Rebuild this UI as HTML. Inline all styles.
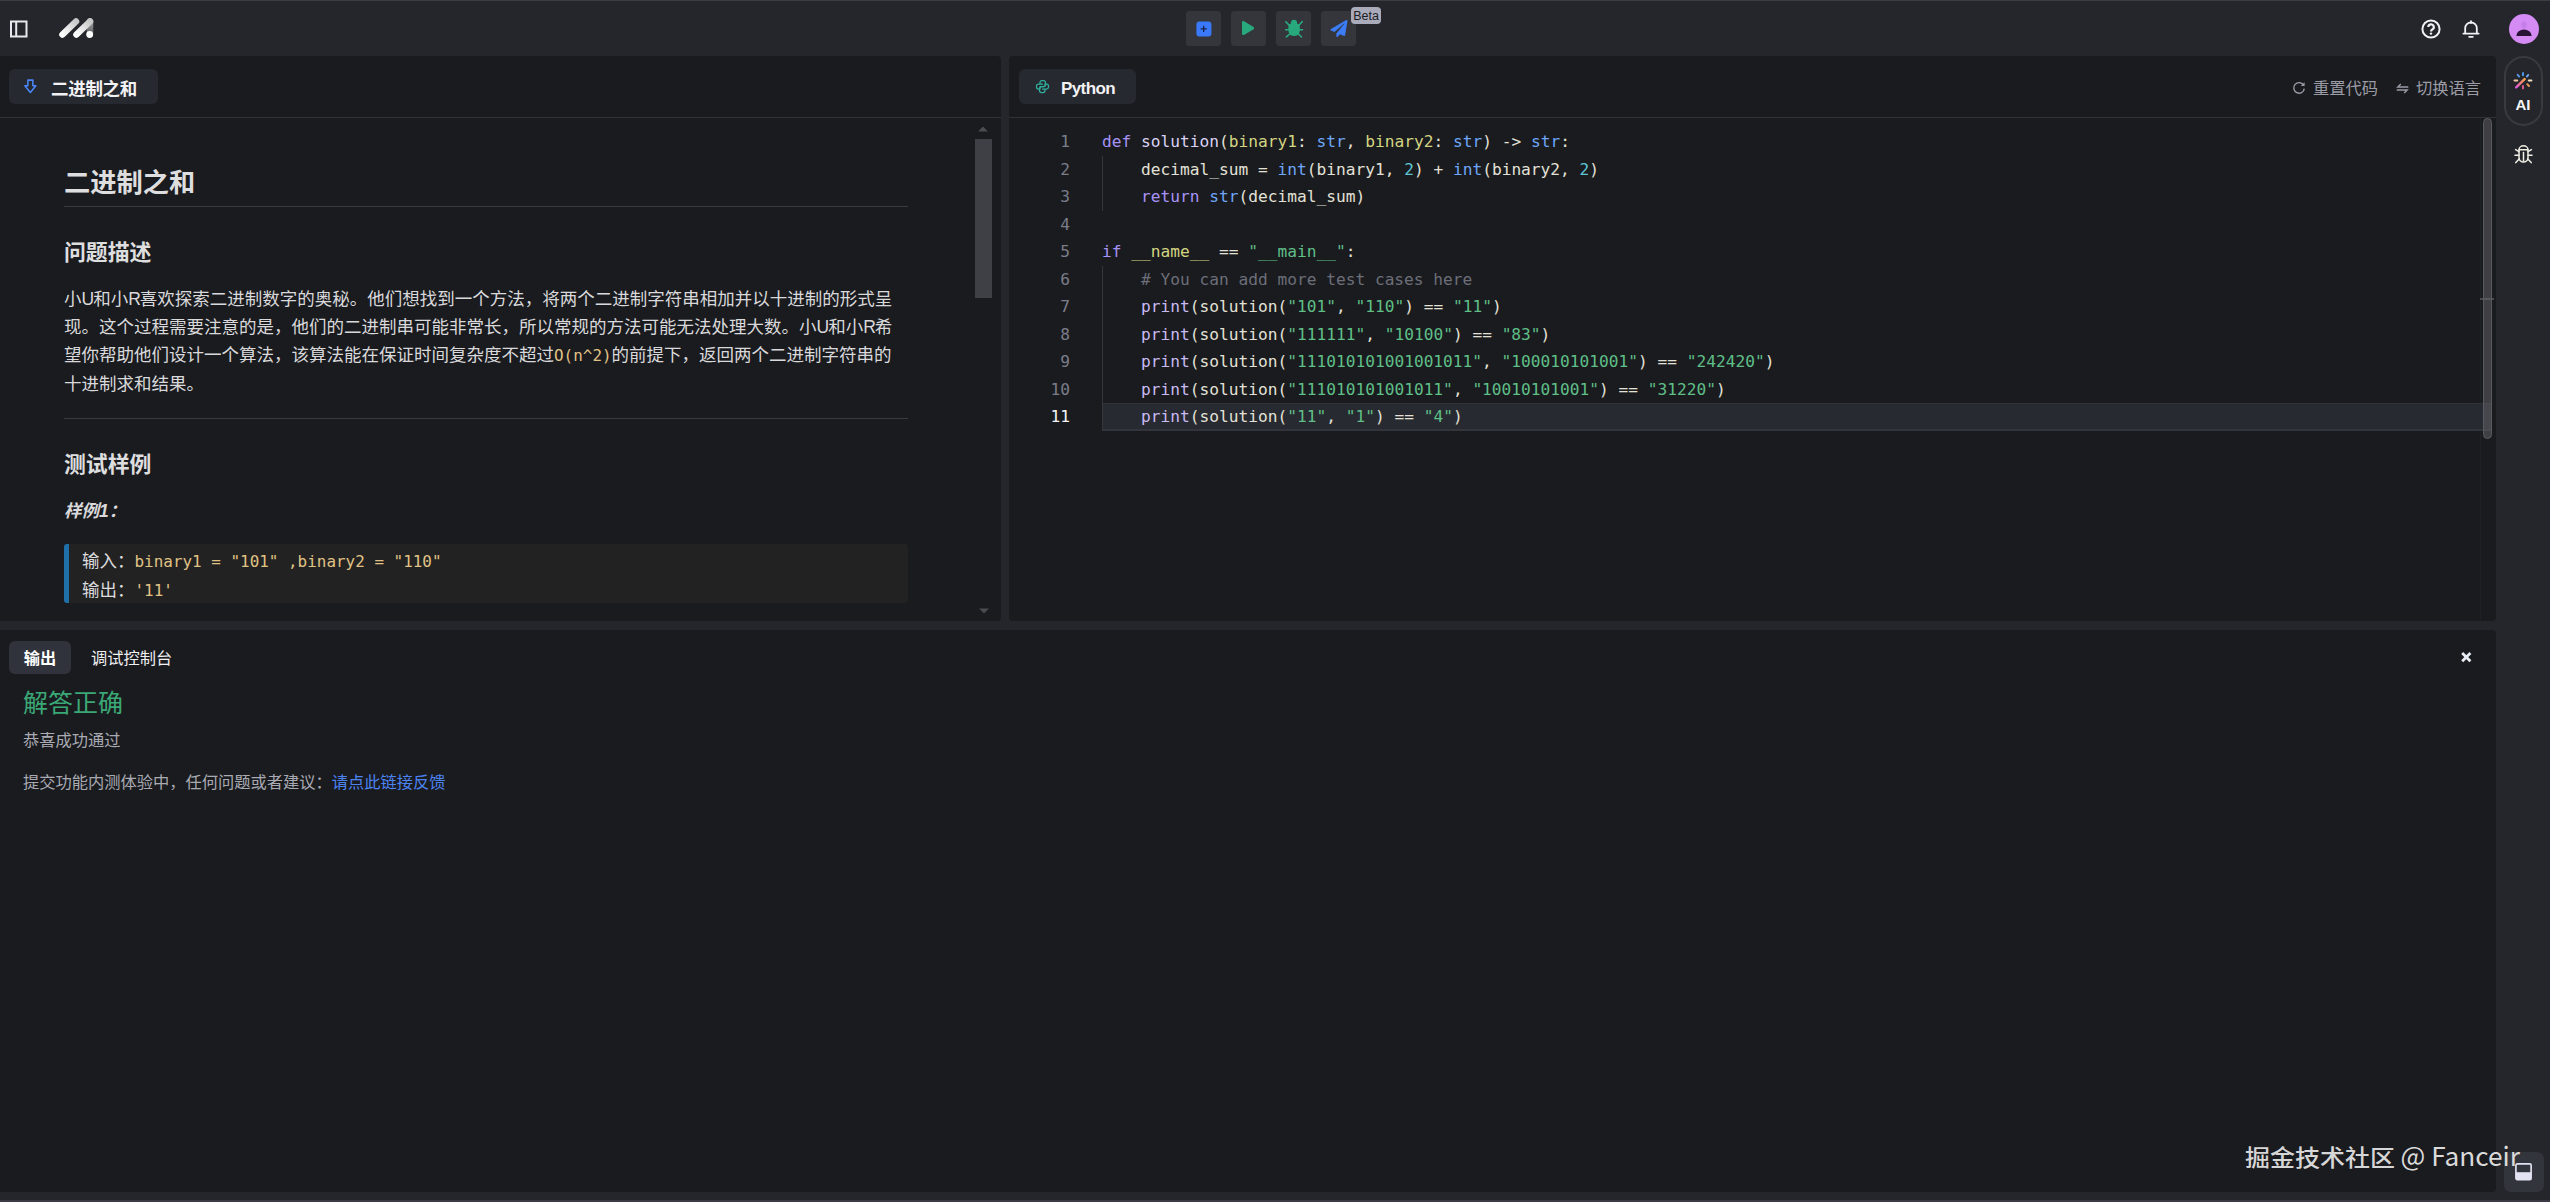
<!DOCTYPE html>
<html lang="zh-CN">
<head>
<meta charset="utf-8">
<title>二进制之和</title>
<style>
*{box-sizing:border-box;margin:0;padding:0}
html,body{width:2550px;height:1202px;overflow:hidden;background:#25262b}
body{position:relative;font-family:"Liberation Sans","Noto Sans CJK SC",sans-serif;color:#e3e3e6;font-size:17.5px}
.abs{position:absolute}
#topline{left:0;top:0;width:2550px;height:1px;background:#3c3d44}
#botline{left:0;top:1200px;width:2550px;height:2px;background:#3a3b44}
.panel{position:absolute;background:#1a1b1f;border-radius:4px;overflow:hidden}
#left{left:0;top:56px;width:1001px;height:565px;border-radius:0 4px 4px 0}
#right{left:1009px;top:56px;width:1487px;height:565px}
#bottom{left:0;top:630px;width:2496px;height:562px;border-radius:0 4px 4px 0}
.sep{position:absolute;left:0;right:0;top:61px;height:1px;background:#303238}
.tab{position:absolute;top:13px;height:35px;background:#272930;border-radius:6px;font-weight:bold;color:#f2f2f5;font-size:17.5px;line-height:35px;white-space:nowrap}
/* header */
.hbtn{position:absolute;top:11px;width:35px;height:35px;border-radius:3.500px;background:#34363c}
/* markdown */
#md{position:absolute;left:64px;top:62px;width:844px;color:#dcdcde}
#md h1{position:absolute;left:0;top:45px;font-size:26.25px;line-height:40px;font-weight:bold;color:#dededf;white-space:nowrap}
#md .hr{position:absolute;left:0;width:844px;height:1px;background:#3a3b40}
#md h2{position:absolute;left:0;font-size:21.875px;line-height:34px;font-weight:bold;color:#dededf;white-space:nowrap}
#md p{position:absolute;left:0;width:844px;font-size:17.5px;line-height:28px;color:#d9d9db}
#md p i{font-style:normal;letter-spacing:-1px}
#md .inl{font-family:"DejaVu Sans Mono","Liberation Mono",monospace;color:#e0c285;font-size:15.950px}
#md .ex{position:absolute;left:0;top:426px;width:844px;height:59px;background:#222222;border-left:5px solid #1f6fa8;border-radius:3px;padding:3px 0 0 13px;font-size:17.500px;line-height:28px;color:#dcdcde;white-space:pre}
#md .ex span{font-family:"DejaVu Sans Mono","Liberation Mono",monospace;color:#e0c285;font-size:15.950px}
/* code */
#code{position:absolute;left:0;top:62px;right:0;bottom:0;font-family:"DejaVu Sans Mono","Liberation Mono",monospace;font-size:16.195px;line-height:27.5px;color:#d8d9de}
.ln{position:absolute;left:0;width:61px;text-align:right;color:#7b7d88;height:27.5px;white-space:pre}
.cl{position:absolute;left:93px;height:27.5px;white-space:pre}
.k{color:#a693f5}.f{color:#d9d2f4}.p{color:#d3d482}.t{color:#6ea6f8}.n{color:#5ec4d6}.s{color:#5fbf87}.c{color:#6c6e78}.b{color:#c8baf3}.w{color:#e3e1d6}

.ln.cur{color:#f4f4f6}
.curline{position:absolute;left:93px;top:284.600px;width:1390px;height:28.600px;background:#282a31;border:1px solid #30323a;border-bottom:2px solid #33353c;border-right:0}
.guide{position:absolute;left:93px;width:1px;background:#34363c}
.tools{position:absolute;top:15px;height:35px;line-height:35px;font-size:16.25px;color:#9b9ca6;white-space:nowrap}
#bottom .ok{position:absolute;left:23px;top:54px;font-size:25px;line-height:38px;color:#3aa876;white-space:nowrap}
#bottom .g1{position:absolute;left:23px;top:98px;font-size:16.25px;line-height:24px;color:#a9aab2;white-space:nowrap}
#bottom .g2{position:absolute;left:23px;top:140px;font-size:16.25px;line-height:24px;color:#a9aab2;white-space:nowrap}
#bottom .g2 a{color:#4b83f0;text-decoration:none}
#wm{z-index:10;position:absolute;left:0;top:0;color:#dadada;white-space:nowrap;font-family:"Noto Sans CJK SC","Liberation Sans",sans-serif}
#wm .c{position:absolute;left:2245px;top:1137px;font-size:24.700px;line-height:38px;transform:scale(1.012,0.93);transform-origin:0 50%;font-weight:500;color:#d6d6d6}
#wm .l{position:absolute;left:2400.500px;top:1136px;font-size:26.200px;line-height:38px}
#side{position:absolute;left:2496px;top:56px;width:54px;height:1146px}
/* bottom */
#bottom .t1{position:absolute;left:9px;top:11px;width:62px;height:33px;background:#31333c;border-radius:6px;font-size:16.25px;font-weight:bold;color:#fff;text-align:center;line-height:35px}
#bottom .t2{position:absolute;left:91px;top:11px;height:33px;font-size:16.25px;color:#f0f0f2;line-height:35px;white-space:nowrap}
</style>
</head>
<body>
<div class="abs" id="topline"></div>

<!-- HEADER -->
<div id="hdr" class="abs" style="left:0;top:0;width:2550px;height:56px">
  <svg class="abs" style="left:10px;top:20px" width="18" height="18" viewBox="0 0 18 18"><rect x="1" y="1.5" width="15.5" height="15" fill="none" stroke="#e8e8f0" stroke-width="2"/><line x1="6.2" y1="1.5" x2="6.2" y2="16.5" stroke="#e8e8f0" stroke-width="2"/></svg>
  <svg class="abs" style="left:57px;top:16px" width="40" height="24" viewBox="0 0 40 24">
    <defs><linearGradient id="lg1" x1="0" y1="1" x2="1" y2="0"><stop offset="0" stop-color="#fff"/><stop offset="1" stop-color="#c8c8c8"/></linearGradient>
    <linearGradient id="lg2" gradientUnits="userSpaceOnUse" x1="0" y1="4" x2="0" y2="20"><stop offset="0" stop-color="#d0d0d0"/><stop offset="1" stop-color="#666"/></linearGradient></defs>
    <line x1="33" y1="5.5" x2="33" y2="18" stroke="url(#lg2)" stroke-width="6.5" stroke-linecap="round" opacity=".75"/>
    <line x1="5.5" y1="18.5" x2="19" y2="5.5" stroke="url(#lg1)" stroke-width="6.5" stroke-linecap="round"/>
    <line x1="19.5" y1="18.5" x2="33" y2="5.5" stroke="url(#lg1)" stroke-width="6.5" stroke-linecap="round"/>
    <circle cx="32.7" cy="18.5" r="3.4" fill="#fff"/>
  </svg>
  <div class="hbtn" style="left:1186px">
    <svg class="abs" style="left:9.500px;top:9.900px" width="16" height="16" viewBox="0 0 16 16"><rect x="0.400" y="0.400" width="15" height="15" rx="3" fill="#3b79fb"/><path d="M7.700 4.700V10.900M4.600 7.800H10.800" stroke="#16234a" stroke-width="1.300" fill="none"/></svg>
  </div>
  <div class="hbtn" style="left:1231px">
    <svg class="abs" style="left:11px;top:10.200px" width="12.300" height="14.200" viewBox="0 0 448 512"><path fill="#27a97d" d="M424.4 214.7L72.4 6.6C43.8-10.3 0 6.1 0 47.9V464c0 37.5 40.7 60.1 72.4 41.3l352-208c31.400-18.500 31.500-64.100 0-82.600z"/></svg>
  </div>
  <div class="hbtn" style="left:1276px">
    <svg class="abs" style="left:0;top:0" width="35" height="35" viewBox="0 0 35 35"><g stroke="#2bab80" stroke-width="1.600" stroke-linecap="round" fill="none"><path d="M13.200 14.200L9.900 10.900M23 14.200L26.300 10.500M12.600 18.700H9.700M23.600 18.700H26.500M13.800 23L10.300 25.800M22.400 23L25.500 26"/></g><ellipse cx="18" cy="12.300" rx="3.200" ry="3.500" fill="#27a97d"/><path d="M12.400 16Q12.400 12.700 15.200 12.700H20.800Q23.800 12.700 23.800 16V19.500a5.700 5.600 0 0 1-11.400 0z" fill="#27a97d"/></svg>
  </div>
  <div class="hbtn" style="left:1321px">
    <svg class="abs" style="left:8.5px;top:9px" width="18" height="17" viewBox="0 0 512 512"><path fill="#3b7cf7" d="M476 3.2L12.5 270.6c-18.1 10.4-15.8 35.6 2.2 43.2L121 358.4l287.3-253.2c5.5-4.9 13.3 2.6 8.6 8.3L176 407v80.5c0 23.6 28.5 32.9 42.5 15.800L282 426l124.6 52.2c14.2 6 30.4-2.9 33-18.2l72-432C515 7.8 493.3-6.8 476 3.2z"/></svg>
  </div>
  <div class="abs" style="left:1351px;top:7px;width:30px;height:17px;border-radius:4px;background:#a9aaba;color:#1c1d24;font-size:12.5px;line-height:19px;text-align:center">Beta</div>
  <!-- right icons -->
  <svg class="abs" style="left:2420px;top:18px" width="22" height="22" viewBox="0 0 22 22"><circle cx="11" cy="11" r="8.6" fill="none" stroke="#f0f0f5" stroke-width="2"/><path d="M8.3 9.1a2.75 2.75 0 1 1 4 2.4c-.9.5-1.3 1-1.300 1.900" fill="none" stroke="#f0f0f5" stroke-width="2.2"/><circle cx="11" cy="15.600" r="1.2" fill="#f0f0f5"/></svg>
  <svg class="abs" style="left:2461px;top:18px" width="20" height="22.500" viewBox="0 0 22 24"><path d="M4.600 16.500V11a6.400 6.400 0 0 1 12.800 0v5.500" fill="none" stroke="#f0f0f5" stroke-width="2"/><path d="M2.600 16.800h16.800" stroke="#f0f0f5" stroke-width="2" stroke-linecap="round"/><path d="M9 20.300h4" stroke="#f0f0f5" stroke-width="2" stroke-linecap="round"/><path d="M11 3v2" stroke="#f0f0f5" stroke-width="2" stroke-linecap="round"/></svg>
  <svg class="abs" style="left:2508px;top:13px" width="32" height="32" viewBox="0 0 32 32"><circle cx="16" cy="16" r="15" fill="#d48bf4"/><ellipse cx="16" cy="11.800" rx="2.600" ry="3.600" fill="#c67ee8"/><path d="M8.500 22.300a7.500 5.800 0 0 1 15 0v.7h-15z" fill="#2a1436"/></svg>
</div>

<!-- LEFT PANEL -->
<div class="panel" id="left">
  <div class="tab" style="left:9px;width:149px;padding-left:42px;line-height:40px;letter-spacing:-0.300px"><svg class="abs" style="left:14.300px;top:10px" width="14.700" height="15.600" viewBox="0 0 16 17"><path d="M5.300 1.200h5.400v6.200h3.300L8 14.600L2 7.400h3.300z" fill="none" stroke="#4a86f7" stroke-width="1.700" stroke-linejoin="round"/></svg>二进制之和</div>
  <div class="sep"></div>
  <div class="abs" style="left:975px;top:83px;width:17px;height:159px;background:#3f4045"></div>
  <svg class="abs" style="left:978px;top:70px" width="10" height="6" viewBox="0 0 10 6"><path d="M0 5.500L5 0.500L10 5.500z" fill="#4b4c52"/></svg>
  <svg class="abs" style="left:978.500px;top:552px" width="10" height="6" viewBox="0 0 10 6"><path d="M0 0.500L5 5.500L10 0.500z" fill="#4b4c52"/></svg>
  <div id="md">
    <h1>二进制之和</h1>
    <div class="hr" style="top:88px"></div>
    <h2 style="top:118px">问题描述</h2>
    <p style="top:167px">小<i>U</i>和小<i>R</i>喜欢探索二进制数字的奥秘。他们想找到一个方法，将两个二进制字符串相加并以十进制的形式呈现。这个过程需要注意的是，他们的二进制串可能非常长，所以常规的方法可能无法处理大数。小<i>U</i>和小<i>R</i>希望你帮助他们设计一个算法，该算法能在保证时间复杂度不超过<span class="inl">O(n^2)</span>的前提下，返回两个二进制字符串的十进制求和结果。</p>
    <div class="hr" style="top:300px"></div>
    <h2 style="top:330px">测试样例</h2>
    <p style="top:379px;font-weight:bold;font-style:italic">样例1：</p>
    <div class="ex">输入：<span>binary1 = "101" ,binary2 = "110"</span>
输出：<span>'11'</span></div>
  </div>
</div>

<!-- RIGHT PANEL -->
<div class="panel" id="right">
  <div class="tab" style="left:10px;width:117px;padding-left:42px;font-size:17px;letter-spacing:-0.600px;line-height:39px"><svg class="abs" style="left:16.200px;top:10.200px" width="15" height="15" viewBox="0 0 15 15"><g fill="none" stroke="#2fae9c" stroke-width="1.250" stroke-linecap="round" stroke-linejoin="round"><path id="pyA" d="M5 5.200V3.500a2 2 0 0 1 2-2h1.500a2 2 0 0 1 2 2V6a1.500 1.500 0 0 1-1.500 1.500H6.500A1.500 1.500 0 0 0 5 9v1H3.500a2 2 0 0 1-2-2V7a2 2 0 0 1 2-2H7.500"/><path transform="rotate(180 7.500 7.500)" d="M5 5.200V3.500a2 2 0 0 1 2-2h1.500a2 2 0 0 1 2 2V6a1.500 1.500 0 0 1-1.500 1.500H6.500A1.500 1.500 0 0 0 5 9v1H3.500a2 2 0 0 1-2-2V7a2 2 0 0 1 2-2H7.500"/></g></svg>Python</div>
  <div class="sep"></div>
  <svg class="abs" style="left:1283px;top:24.500px" width="14" height="14" viewBox="0 0 14 14"><path d="M11.600 4.200A5.300 5.300 0 1 0 12.300 7.600" fill="none" stroke="#9b9ca6" stroke-width="1.400"/><path d="M12.600 1.200v3.800H8.800z" fill="#9b9ca6"/></svg>
  <div class="tools" style="left:1304px">重置代码</div>
  <svg class="abs" style="left:1386.500px;top:26.500px" width="13" height="11" viewBox="0 0 13 11"><path d="M12.300 4H1.800L4.800 1M0.700 7H11.200L8.200 10" fill="none" stroke="#9b9ca6" stroke-width="1.400"/></svg>
  <div class="tools" style="left:1407px">切换语言</div>
  <div class="abs" style="left:1471px;top:62px;width:1px;height:503px;background:#1f2025"></div>
  <div class="abs" style="left:1473.500px;top:62px;width:9.600px;height:321px;border-radius:4.800px;background:rgba(100,100,106,0.5);border:1px solid #595a60;z-index:3"></div>
  <div class="abs" style="left:1471px;top:242px;width:14px;height:1.500px;background:#4a4b52"></div>
  <div id="code">
    <div class="curline"></div>
    <div class="guide" style="top:37.5px;height:55px"></div>
    <div class="guide" style="top:147.5px;height:165px"></div>
    <div class="ln" style="top:10.0px">1</div>
    <div class="cl" style="top:10.0px"><span class="k">def</span><span class="w"> </span><span class="f">solution</span><span class="w">(</span><span class="p">binary1</span><span class="w">: </span><span class="t">str</span><span class="w">, </span><span class="p">binary2</span><span class="w">: </span><span class="t">str</span><span class="w">) -&gt; </span><span class="t">str</span><span class="w">:</span></div>
    <div class="ln" style="top:37.5px">2</div>
    <div class="cl" style="top:37.5px"><span class="w">    decimal_sum = </span><span class="t">int</span><span class="w">(binary1, </span><span class="n">2</span><span class="w">) + </span><span class="t">int</span><span class="w">(binary2, </span><span class="n">2</span><span class="w">)</span></div>
    <div class="ln" style="top:65.0px">3</div>
    <div class="cl" style="top:65.0px"><span class="w">    </span><span class="k">return</span><span class="w"> </span><span class="t">str</span><span class="w">(decimal_sum)</span></div>
    <div class="ln" style="top:92.5px">4</div>
    <div class="ln" style="top:120.0px">5</div>
    <div class="cl" style="top:120.0px"><span class="k">if</span><span class="w"> </span><span class="p">__name__</span><span class="w"> == </span><span class="s">"__main__"</span><span class="w">:</span></div>
    <div class="ln" style="top:147.5px">6</div>
    <div class="cl" style="top:147.5px"><span class="c">    # You can add more test cases here</span></div>
    <div class="ln" style="top:175.0px">7</div>
    <div class="cl" style="top:175.0px"><span class="w">    </span><span class="b">print</span><span class="w">(solution(</span><span class="s">"101"</span><span class="w">, </span><span class="s">"110"</span><span class="w">) == </span><span class="s">"11"</span><span class="w">)</span></div>
    <div class="ln" style="top:202.5px">8</div>
    <div class="cl" style="top:202.5px"><span class="w">    </span><span class="b">print</span><span class="w">(solution(</span><span class="s">"111111"</span><span class="w">, </span><span class="s">"10100"</span><span class="w">) == </span><span class="s">"83"</span><span class="w">)</span></div>
    <div class="ln" style="top:230.0px">9</div>
    <div class="cl" style="top:230.0px"><span class="w">    </span><span class="b">print</span><span class="w">(solution(</span><span class="s">"111010101001001011"</span><span class="w">, </span><span class="s">"100010101001"</span><span class="w">) == </span><span class="s">"242420"</span><span class="w">)</span></div>
    <div class="ln" style="top:257.5px">10</div>
    <div class="cl" style="top:257.5px"><span class="w">    </span><span class="b">print</span><span class="w">(solution(</span><span class="s">"111010101001011"</span><span class="w">, </span><span class="s">"10010101001"</span><span class="w">) == </span><span class="s">"31220"</span><span class="w">)</span></div>
    <div class="ln cur" style="top:285.0px">11</div>
    <div class="cl" style="top:285.0px"><span class="w">    </span><span class="b">print</span><span class="w">(solution(</span><span class="s">"11"</span><span class="w">, </span><span class="s">"1"</span><span class="w">) == </span><span class="s">"4"</span><span class="w">)</span></div>
  </div>
</div>

<!-- BOTTOM PANEL -->
<div class="panel" id="bottom">
  <div class="t1">输出</div>
  <div class="t2">调试控制台</div>
  <div class="ok">解答正确</div>
  <div class="g1">恭喜成功通过</div>
  <div class="g2">提交功能内测体验中，任何问题或者建议：<a>请点此链接反馈</a></div>
  <svg class="abs" style="left:2460px;top:21px" width="12" height="12" viewBox="0 0 12 12"><path d="M2.200 2L10.400 10.200M10.400 2L2.200 10.200" stroke="#e8ecf4" stroke-width="2.800" fill="none"/></svg>
</div>

<div id="wm"><span class="c">掘金技术社区</span><span class="l">@ Fanceir</span></div>
<div id="side">
  <div class="abs" style="left:8px;top:0.400px;width:39.200px;height:69.600px;border:2px solid #383a42;border-radius:20px"></div>
  <svg class="abs" style="left:17px;top:14.500px" width="20" height="20" viewBox="0 0 20 20">
    <defs><linearGradient id="wg" gradientUnits="userSpaceOnUse" x1="3" y1="16.500" x2="11.800" y2="8"><stop offset="0" stop-color="#d65ae2"/><stop offset="0.45" stop-color="#f0708a"/><stop offset="1" stop-color="#f6a64c"/></linearGradient></defs>
    <g stroke-width="1.900" stroke-linecap="round" fill="none">
      <path d="M10 1.900V4.300" stroke="#4f9cf0"/><path d="M4.700 3.800L6.100 5.500" stroke="#5a9af0"/><path d="M15.300 3.900L13.900 5.500" stroke="#6aa6f5"/>
      <path d="M1.500 9.500H4.300" stroke="#f3c9a5"/><path d="M15.700 9.500H18.500" stroke="#f0dcc0"/>
      <path d="M14.200 13.200L16 15" stroke="#f09a55"/><path d="M10 14.900V17.400" stroke="#e85a9a"/>
    </g>
    <path d="M3.200 16.300L11.600 8.200" stroke="url(#wg)" stroke-width="2.500" stroke-linecap="round"/>
  </svg>
  <div class="abs" style="left:0;top:38px;width:54px;text-align:center;font-size:15px;font-weight:bold;color:#f4f4f8;line-height:22px">AI</div>
  <svg class="abs" style="left:17px;top:88px" width="21" height="21" viewBox="0 0 21 21"><g fill="none" stroke="#efeee4" stroke-width="1.500" stroke-linecap="round" stroke-linejoin="round"><path d="M6 5.800a4.500 4 0 0 1 9 0"/><path d="M6 5.800H15V13.500a4.500 4.500 0 0 1-9 0z"/><path d="M10.500 8.600V17"/><path d="M6 7.600L2.600 5.600M15 7.600l3.400-2M6 11.200H2M15 11.200h4M6.400 14.800L2.800 18.600M14.600 14.800l3.600 3.800"/></g></svg>
  <div class="abs" style="left:8px;top:1096px;width:40px;height:40px;border-radius:7px;background:#33353d"></div>
  <svg class="abs" style="left:19px;top:1107px" width="17.500" height="17.500" viewBox="0 0 19 19"><rect x="1" y="1" width="16.500" height="17" rx="1.500" fill="none" stroke="#e2e2f2" stroke-width="1.800"/><rect x="1" y="10" width="16.500" height="8" fill="#e2e2f2"/></svg>
</div>
<div class="abs" id="botline"></div>
</body>
</html>
